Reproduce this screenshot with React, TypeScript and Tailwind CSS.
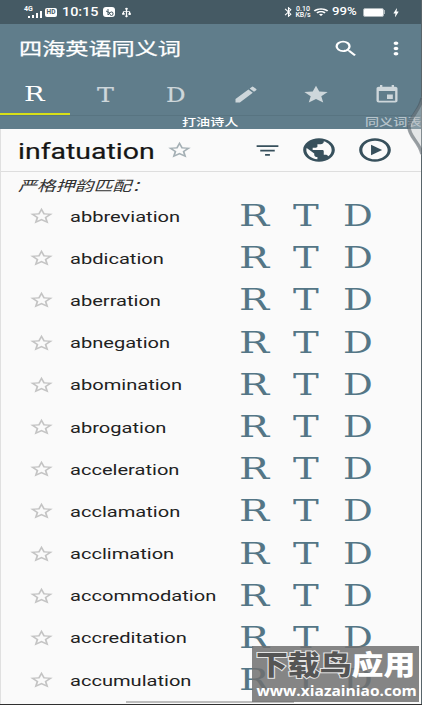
import React from 'react';
import { MdBluetooth, MdBolt, MdCreate, MdFilterList, MdInsertInvitation, MdMoreVert, MdOutlinePlayCircle, MdPublic, MdSearch, MdStar, MdStarBorder, MdUsb, MdWifi } from 'react-icons/md';

const words = [
    'abbreviation', 'abdication', 'aberration', 'abnegation', 'abomination', 'abrogation',
    'acceleration', 'acclamation', 'acclimation', 'accommodation', 'accreditation', 'accumulation',
];

interface WideProps {
    children: React.ReactNode;
}

// Text on this screen is wider than its font, so it is scaled sideways
const Wide: React.FC<WideProps> = ({ children }) => (
    <span className="block origin-left scale-x-[1.33] whitespace-nowrap">{children}</span>
);

const StatusBar: React.FC = () => (
    <div className="flex h-6 items-center bg-[#455a64] pl-6 text-white">
        <div className="flex h-[13px] w-[20px] items-end pb-px">
            <span className="-mr-1.5 w-2.5 self-start text-[7px] font-bold leading-[7px]">4G</span>
            <svg width="14" height="9" viewBox="0 0 14 9" fill="currentColor">
                <path d="M0 7h2v2H0zM4 6h2v3H4zM8 4h2v5H8zM12 2h2v7h-2z" />
            </svg>
        </div>
        <div className="ml-[1px] flex h-[9px] w-3 items-center justify-center rounded-[2px] bg-white text-[6.5px] font-bold leading-none text-[#455a64]">HD</div>
        <div className="ml-[5px] w-[41px] text-[12px] font-medium">
            <span className="block origin-left scale-x-[1.2]">10:15</span>
        </div>
        <div className="flex h-[10px] w-3 items-center justify-center rounded-[3px] bg-white">
            <svg width="9" height="7" viewBox="0 0 9 7" fill="none" stroke="#455a64">
                <path d="M3 0v6M1 2l4 2-2 2M5 4a1.5 1.5 0 1 1 3 1 1.5 1.5 0 0 1-3 0" />
            </svg>
        </div>
        <MdUsb className="ml-1 h-[11px] w-[15px] rotate-180" preserveAspectRatio="none" />
        <MdBluetooth className="ml-auto h-[12px] w-[13px]" preserveAspectRatio="none" />
        <div className="w-[16px] text-center text-[7px] font-medium leading-[6px]">
            <span className="-mx-1 block">0.10</span>
            <span className="-mx-1 block">KB/s</span>
        </div>
        <MdWifi className="ml-[2px] h-[12px] w-[16px]" preserveAspectRatio="none" />
        <div className="ml-[3px] w-[31px] text-[11px] font-medium">
            <span className="block origin-left scale-x-[1.2]">99%</span>
        </div>
        <div className="h-[9px] w-[21px] rounded-[2px] border border-[#aab4b8] bg-white" />
        <div className="h-[4px] w-px bg-[#aab4b8]" />
        <MdBolt className="ml-[5px] mr-[20px] h-[11px] w-[12px]" preserveAspectRatio="none" />
    </div>
);

const tabClass = "flex h-full flex-1 items-center justify-center pt-[3px] text-[#ced7db]";

const App: React.FC = () => (
    <div className="relative flex h-[705px] w-[422px] flex-col overflow-hidden bg-[#fafafa] font-[Roboto,'Noto_Sans_CJK_SC',sans-serif] text-[#212121]">
        <StatusBar />

        <header className="bg-[#607d8b] text-white">
            <div className="flex h-[46px] items-center pl-[19px] pt-[3px]">
                <div className="flex-1 text-[17.4px] leading-6 [-webkit-text-stroke:0.25px_#fff]"><Wide>四海英语同义词</Wide></div>
                <MdSearch className="h-[21px] w-[28px]" preserveAspectRatio="none" />
                <MdMoreVert className="ml-[22px] mr-[12px] h-[21px] w-[28px]" preserveAspectRatio="none" />
            </div>
            <div className="flex h-[45px]">
                <div className="flex h-full flex-1 items-center justify-center border-b-2 border-[#d8df18] pt-[7px] font-['DejaVu_Serif',serif] text-[19.5px] leading-none">
                    <span className="-ml-px scale-x-[1.4]">R</span>
                </div>
                <div className={tabClass}><span className="scale-x-[1.3] pt-1 font-['DejaVu_Serif',serif] text-[19.5px] leading-none [-webkit-text-stroke:0.2px_#ced7db]">T</span></div>
                <div className={tabClass}><span className="scale-x-[1.25] pt-1 font-['DejaVu_Serif',serif] text-[19.5px] leading-none [-webkit-text-stroke:0.2px_#ced7db]">D</span></div>
                <div className={tabClass}><MdCreate className="h-[21px] w-7" preserveAspectRatio="none" /></div>
                <div className={tabClass}><MdStar className="h-[21px] w-7" preserveAspectRatio="none" /></div>
                <div className={tabClass}><MdInsertInvitation className="h-[21px] w-7" preserveAspectRatio="none" /></div>
            </div>
            <div className="flex h-[14px] border-t border-[#587481] text-[10.6px] font-medium leading-[14px]">
                <div className="ml-[182px] w-[183px]"><Wide>打油诗人</Wide></div>
                <div className="w-14 text-[#b7c4cb]"><Wide>同义词表</Wide></div>
            </div>
        </header>

        <div className="flex h-[43px] items-center border-b border-[#dedede] pl-[18px]">
            <div className="w-[148px] pt-[3px] text-[21.4px] leading-7 text-[#151515] [-webkit-text-stroke:0.2px_#151515]"><Wide>infatuation</Wide></div>
            <MdStarBorder className="h-5 w-[27px] text-[#a5b0b5]" preserveAspectRatio="none" />
            <div className="ml-auto flex items-center text-[#37505c]">
                <MdFilterList className="h-[21px] w-[29px]" preserveAspectRatio="none" />
                <MdPublic className="ml-[18px] h-[28px] w-[38px]" preserveAspectRatio="none" />
                <MdOutlinePlayCircle className="ml-[18px] mr-[28px] h-[28px] w-[38px]" preserveAspectRatio="none" />
            </div>
        </div>

        <div className="h-[23px] shrink-0 pl-[18px] pt-1 text-[14.2px] italic leading-5 text-[#333]"><Wide>严格押韵匹配：</Wide></div>

        <ul className="shrink-0">
            {words.map((word) => (
                <li key={word} className="flex h-[42.2px] items-center pl-7">
                    <MdStarBorder className="h-5 w-[27px] text-[#c4c4c4]" preserveAspectRatio="none" />
                    <div className="ml-[15px] w-[169px] pt-px text-[15.1px] leading-5"><Wide>{word}</Wide></div>
                    <div className="flex pt-px font-['DejaVu_Serif',serif] text-[29px] leading-none text-[#547686]">
                        <span className="w-[54px] origin-left scale-x-[1.38]">R</span>
                        <span className="w-[50px] origin-left scale-x-[1.33]">T</span>
                        <span className="origin-left scale-x-[1.28]">D</span>
                    </div>
                </li>
            ))}
        </ul>

        {/* window edges and scroll bar */}
        <div className="absolute bottom-0 left-0 top-[129px] w-px bg-[#e0e0e0]" />
        <div className="absolute bottom-0 right-0 top-0 w-px bg-[#59656a]" />
        <div className="absolute bottom-[2px] left-[126px] h-[2px] w-[168px] bg-[#bdbdbd]" />
        <div className="absolute bottom-0 left-0 h-px w-full bg-[#303030]" />

        <svg className="absolute right-0 top-[96px]" width="16" height="60" viewBox="0 0 16 60">
            <path d="M16 0C14 14 2 20 2 31s11 15 14 29z" fill="#c4c8ca" fillOpacity=".4" />
            <path d="M16 2C14 15 3 21 3 31s10 14 13 27" fill="none" stroke="#455057" strokeOpacity=".5" strokeWidth="3.5" />
        </svg>

        <div className="absolute bottom-[3px] right-[3px] h-[56px] w-[167px] bg-[#707070]/85 font-['Noto_Sans_CJK_SC',sans-serif] text-white">
            <div className="ml-[4px] flex h-9 items-center text-[27px] font-black leading-9">
                <span className="origin-left scale-x-[1.18] whitespace-nowrap">
                    <span className="text-[#555] [-webkit-text-stroke:2px_#e4e4e4] [paint-order:stroke_fill]">下载鸟</span>应用
                </span>
            </div>
            <div className="w-[145px] origin-left scale-x-[1.11] pl-1 font-['Open_Sans',sans-serif] text-[14px] font-bold leading-[18px]">www.xiazainiao.com</div>
        </div>
    </div>
);

export default App;
